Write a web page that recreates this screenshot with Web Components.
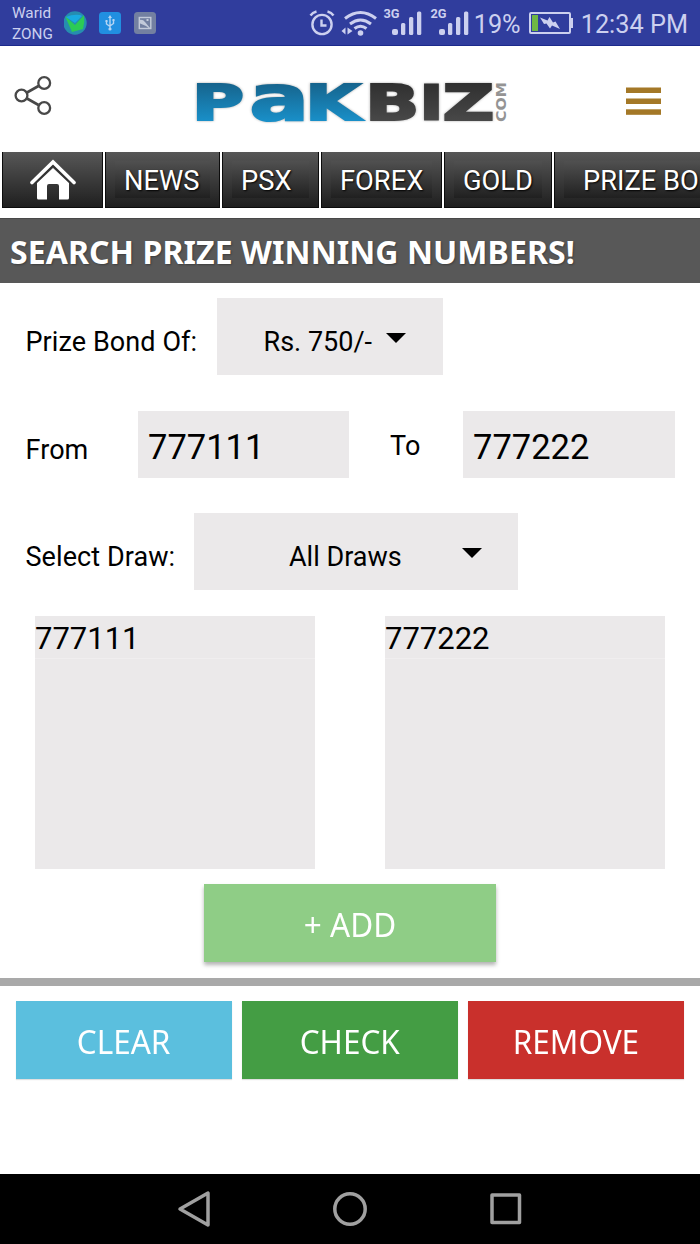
<!DOCTYPE html>
<html lang="en">
<head>
<meta charset="utf-8">
<title>PakBiz - Prize Bond</title>
<style>
    body {
        margin: 0;
        width: 700px;
        height: 1244px;
        overflow: hidden;
        background: #fff;
        color: #000;
        font-family: Roboto, sans-serif;
    }
</style>
</head>
<body>
<prize-page></prize-page>

<script>
function define(name, html) {
    const template = document.createElement("template")
    template.innerHTML = html

    customElements.define(name, class extends HTMLElement {
        constructor() {
            super()
            this.attachShadow({ mode: "open" })
            this.shadowRoot.appendChild(template.content.cloneNode(true))
        }
    })
}

define("status-bar", `
    <style>
        :host {
            display: flex;
            align-items: center;
            box-sizing: border-box;
            height: 46px;
            padding: 0 12px;
            background: #303d9d;
            border-bottom: 1px solid #1c2a8c;
            color: #ccd0ef;
        }
        .carriers { font-size: 15.3px; line-height: 21px; width: 52px; padding-top: 3px; }
        svg { display: block; flex: none; }
        .spacer { flex: 1; }
        .value { font-size: 25.3px; line-height: 30px; padding-top: 4px; white-space: nowrap; }
        .percent { width: 53px; }
    </style>
    <div class="carriers">Warid<br>ZONG</div>
    <svg width="96" height="46" viewBox="64 0 96 46">
        <circle cx="75" cy="23" r="11.7" fill="#268daf"/>
        <path d="M65 16l10 9 9-10q1 7-1 14l-11 3z" fill="#2ccb55"/>
        <path d="M66 17q7-3 14-2l2 1-7 7z" fill="#19aae1"/>
        <rect x="99" y="12" width="22" height="22" rx="3.5" fill="#218fe1"/>
        <g fill="none" stroke="#b5d5f4" stroke-width="1.4">
            <path d="M110 17v11M106.500 21v3l3.500 2.500M113.500 20v3.500l-3.500 2.500"/>
        </g>
        <path d="M110 15l2 3h-4zM105.500 20h2v2h-2zM112.500 19h2v2h-2z" fill="#b5d5f4"/>
        <circle cx="110" cy="29" r="1.600" fill="#b5d5f4"/>
        <rect x="134" y="12" width="22" height="22" rx="3.500" fill="#7380a1"/>
        <rect x="139.300" y="17.500" width="11.500" height="11" fill="none" stroke="#c3cada" stroke-width="1.400"/>
        <path d="M139 20q4-1 6 2l5 6v1l-4-3-7-3z" fill="#c3cada"/>
        <rect x="146.500" y="19" width="2" height="2" fill="#c3cada"/>
    </svg>
    <div class="spacer"></div>
    <svg width="166" height="46" viewBox="307 0 166 46" fill="#ccd0ef">
        <g fill="none" stroke="#ccd0ef">
            <circle cx="321" cy="24.500" r="9.600" stroke-width="2.400"/>
            <path d="M320.500 19.500v6h5" stroke-width="2.400"/>
            <path d="M309.500 15.500q2-3 6-4M332.500 15.500q-2-3-6-4" stroke-width="2.400"/>
            <path d="M344 18.500q15.500-12 31 0M349 24q10.500-8 21 0M353.500 28.500q6-4.500 12 0" stroke-width="3"/>
        </g>
        <circle cx="359.500" cy="33" r="2.800"/>
        <path d="M340.500 31l4-3.500v7zM346.500 27.500l5 3.500-5 3.500z"/>
        <text x="382.500" y="17.800" font-size="12.800" font-weight="700">3G</text>
        <text x="429.500" y="17.800" font-size="12.800" font-weight="700">2G</text>
        <rect x="391" y="29" width="6" height="6" rx="2"/>
        <rect x="400" y="23" width="4.300" height="12" rx="1.500"/>
        <rect x="408" y="17" width="4.300" height="18" rx="1.500"/>
        <rect x="416" y="11.500" width="4.300" height="23.500" rx="1.500"/>
        <rect x="438" y="29" width="6" height="6" rx="2"/>
        <rect x="447" y="23" width="4.300" height="12" rx="1.500"/>
        <rect x="455" y="17" width="4.300" height="18" rx="1.500"/>
        <rect x="463" y="11.500" width="4.300" height="23.500" rx="1.500"/>
    </svg>
    <div class="value percent">19%</div>
    <svg width="54" height="46" viewBox="526 0 54 46">
        <rect x="529" y="13" width="40" height="20" rx="1" fill="none" stroke="#ccd0ef" stroke-width="2"/>
        <rect x="570" y="18" width="2" height="10" fill="#ccd0ef"/>
        <rect x="531" y="15" width="6" height="16" fill="#6fb744"/>
        <path d="M539 17.500l7.500 3 2-3.500 3.500 5.500 2.500-1 4.500 7.500-8-3.500-2 3-3.500-5-2.500.5z" fill="#ccd0ef"/>
    </svg>
    <div class="value">12:34 PM</div>
`)

define("brand-logo", `
    <style>
        :host { display: block; width: 340px; height: 70px; }
        svg { display: block; overflow: visible; }
        .word { font: 700 50px "DejaVu Sans", sans-serif; }
        .blue { fill: url(#blue); stroke: url(#blue); }
        .dark { fill: url(#dark); stroke: url(#dark); }
        .com { font: 700 14.5px "DejaVu Sans", sans-serif; }
    </style>
    <svg width="340" height="70" viewBox="0 0 340 70">
        <defs>
            <linearGradient id="blue" gradientUnits="userSpaceOnUse" x1="0" y1="18" x2="0" y2="56">
                <stop offset="0" stop-color="#16648d"/>
                <stop offset="1" stop-color="#198fc8"/>
            </linearGradient>
            <linearGradient id="dark" gradientUnits="userSpaceOnUse" x1="0" y1="18" x2="0" y2="56">
                <stop offset="0" stop-color="#303030"/>
                <stop offset="1" stop-color="#484848"/>
            </linearGradient>
        </defs>
        <g transform="scale(1.42 1)" style="filter: drop-shadow(0 0 1px #aaa)">
            <text class="word" y="55" stroke-width="2.200"><tspan class="blue" x="7.700">P</tspan><tspan class="blue" x="48.200" font-size="62">a</tspan><tspan class="blue" x="87.500">K</tspan><tspan class="dark" x="129.700">B</tspan><tspan class="dark" x="167" stroke-width="1">I</tspan><tspan class="dark" x="184.300">Z</tspan></text>
        </g>
        <text class="com" transform="translate(325 57) rotate(-90)" fill="#949494" textLength="40" lengthAdjust="spacingAndGlyphs">COM</text>
    </svg>
`)

define("site-header", `
    <style>
        :host {
            display: flex;
            align-items: flex-start;
            justify-content: space-between;
            box-sizing: border-box;
            height: 105px;
            padding: 19px 38px 0 14px;
        }
        svg { display: block; }
        .share { margin-top: 9px; }
        .menu { margin-top: 21px; }
        brand-logo { margin-left: 22px; }
    </style>
    <svg class="share" width="40" height="44" viewBox="0 0 40 44" fill="none" stroke="#484848" stroke-width="2.300">
        <path d="M13 18.500l11.500-6.500M13 24.500l11.500 6.500" stroke-width="2.600"/>
        <circle cx="7.500" cy="21.500" r="5.900"/>
        <circle cx="30.200" cy="9" r="5.900"/>
        <circle cx="30.200" cy="34" r="5.900"/>
    </svg>
    <brand-logo></brand-logo>
    <svg class="menu" width="36" height="30" viewBox="0 0 36 30" fill="#a47827">
        <rect x="0" y="1.500" width="35" height="5.500"/>
        <rect x="0" y="12.500" width="35" height="5.500"/>
        <rect x="0" y="23.300" width="35" height="5.500"/>
    </svg>
`)

define("nav-tab", `
    <style>
        :host {
            display: flex;
            flex: none;
            box-sizing: border-box;
            height: 56px;
            padding: 9px 9px 9px;
            border: solid #0c0c0c;
            border-width: 0 1px 1px;
            background: linear-gradient(#575757, #1f1f1f);
            color: #fff;
            font-size: 27.3px;
        }
        .face {
            display: flex;
            flex: 1;
            align-items: center;
            box-sizing: border-box;
            padding: 3px 0 0 var(--indent, 9px);
            background: linear-gradient(#505050, #202020);
            text-shadow: 1px 1px 2px #000;
            white-space: nowrap;
        }
        :host([plain]) .face { background: none; justify-content: center; padding: 1px 0 0; }
    </style>
    <div class="face"><slot></slot></div>
`)

define("section-title", `
    <style>
        :host {
            display: flex;
            align-items: center;
            box-sizing: border-box;
            height: 65px;
            padding: 1px 10px 0;
            background: #585858;
            border-top: 1px solid #484848;
            color: #fff;
            font: 700 32px "Noto Sans", sans-serif;
            letter-spacing: .07px;
            white-space: nowrap;
            text-shadow: 1px 1px 2px rgba(0, 0, 0, .3);
        }
    </style>
    <slot></slot>
`)

define("drop-select", `
    <style>
        :host {
            display: flex;
            align-items: center;
            box-sizing: border-box;
            height: 77px;
            background: #ebe9ea;
            font-size: 27px;
        }
        .label { padding-top: 11px; white-space: nowrap; }
        .arrow {
            border: solid transparent;
            border-width: 10px 10px 0;
            border-top-color: #000;
            margin-top: 3px;
        }
    </style>
    <div class="label"><slot></slot></div>
    <div class="arrow"></div>
`)

define("number-box", `
    <style>
        :host {
            display: flex;
            align-items: center;
            box-sizing: border-box;
            height: 67px;
            padding: 5px 10px 0;
            background: #ebe9ea;
            font-size: 34.5px;
        }
    </style>
    <slot></slot>
`)

define("number-list", `
    <style>
        :host {
            display: block;
            width: 280px;
            height: 253px;
            background: #ebe9ea;
            font-size: 31px;
        }
        .option {
            height: 42px;
            line-height: 46px;
            border-bottom: 1px solid #f0eeef;
        }
    </style>
    <div class="option"><slot></slot></div>
`)

define("action-button", `
    <style>
        :host {
            display: flex;
            align-items: center;
            justify-content: center;
            box-sizing: border-box;
            height: 78px;
            color: #fff;
            font: 31.5px "Noto Sans", sans-serif;
        }
        /* labels are slightly taller than the font's own proportions */
        .label { transform: scaleY(1.06); }
    </style>
    <div class="label"><slot></slot></div>
`)

define("system-nav", `
    <style>
        :host {
            display: flex;
            align-items: center;
            justify-content: center;
            gap: 116px;
            height: 70px;
            background: #000;
        }
    </style>
    <svg width="40" height="40" viewBox="0 0 40 40" fill="none" stroke="#a0a0a0" stroke-width="3.500" stroke-linejoin="round"><path d="M6 20L34 4v32z"/></svg>
    <svg width="40" height="40" viewBox="0 0 40 40" fill="none" stroke="#a0a0a0" stroke-width="3.500"><circle cx="20" cy="20" r="15.200"/></svg>
    <svg width="40" height="40" viewBox="0 0 40 40" fill="none" stroke="#a0a0a0" stroke-width="3.500" stroke-linejoin="round"><rect x="6" y="6" width="27.500" height="27.500"/></svg>
`)

define("prize-page", `
    <style>
        :host { display: flex; flex-direction: column; height: 1244px; }
        nav {
            display: flex;
            gap: 2px;
            height: 56px;
            padding: 1px 0 10px 2px;
            overflow: hidden;
        }
        form { display: flex; flex-direction: column; padding: 15px 25px 0; font-size: 27px; }
        .row { display: flex; align-items: center; white-space: nowrap; }
        .row + .row { margin-top: 36px; }
        .row + .row + .row { margin-top: 35px; }
        label { box-sizing: border-box; padding: 11px 0 0 .5px; letter-spacing: .08px; }
        .lists { display: flex; justify-content: space-between; padding: 26px 10px 0; }
        .add {
            align-self: center;
            width: 292px;
            margin-top: 15px;
            background: #8fcd86;
            box-shadow: 0 3px 4px rgba(0, 0, 0, .3);
        }
        hr { width: 100%; height: 8px; margin: 16px 0 15px; border: 0; background: #a9a9a9; }
        .actions { display: flex; gap: 10px; padding: 0 16px 0 15.5px; }
        .actions action-button { flex: 1; box-shadow: 0 1px 1px rgba(0, 0, 0, .12); }
        system-nav { margin-top: auto; }
    </style>
    <status-bar></status-bar>
    <site-header></site-header>
    <nav>
        <nav-tab plain style="width: 101px">
            <svg width="46" height="42" viewBox="0 0 46 42" fill="#fff">
                <path d="M23 9L39 24v15q0 1.500-1.500 1.500H29V27q0-2-2-2h-8q-2 0-2 2v13.500H8.500Q7 40.500 7 39V24z"/>
                <path d="M2 23.500L23 3l21 20.500" fill="none" stroke="#fff" stroke-width="3.600" stroke-linecap="round"/>
                <path d="M4.500 25L23 7l18.500 18" fill="none" stroke="#333" stroke-width="1.300"/>
            </svg>
        </nav-tab>
        <nav-tab style="width: 115px">NEWS</nav-tab>
        <nav-tab style="width: 97px">PSX</nav-tab>
        <nav-tab style="width: 121px">FOREX</nav-tab>
        <nav-tab style="width: 108px">GOLD</nav-tab>
        <nav-tab style="width: 220px; --indent: 19px">PRIZE BOND</nav-tab>
    </nav>
    <section-title>SEARCH PRIZE WINNING NUMBERS!</section-title>
    <form>
        <div class="row">
            <label style="width: 192px">Prize Bond Of:</label>
            <drop-select style="width: 226px; padding-left: 46.5px; gap: 14px">Rs. 750/-</drop-select>
        </div>
        <div class="row">
            <label style="width: 113px">From</label>
            <number-box style="width: 211px">777111</number-box>
            <label style="width: 114px; padding: 3px 0 0 41px">To</label>
            <number-box style="width: 212px">777222</number-box>
        </div>
        <div class="row">
            <label style="width: 169px">Select Draw:</label>
            <drop-select style="width: 324px; padding-left: 95px; gap: 60px">All Draws</drop-select>
        </div>
        <div class="lists">
            <number-list>777111</number-list>
            <number-list>777222</number-list>
        </div>
        <action-button class="add">+ ADD</action-button>
    </form>
    <hr>
    <div class="actions">
        <action-button style="background: #5bbfde">CLEAR</action-button>
        <action-button style="background: #449d44">CHECK</action-button>
        <action-button style="background: #c9302c">REMOVE</action-button>
    </div>
    <system-nav></system-nav>
`)
</script>
</body>
</html>
